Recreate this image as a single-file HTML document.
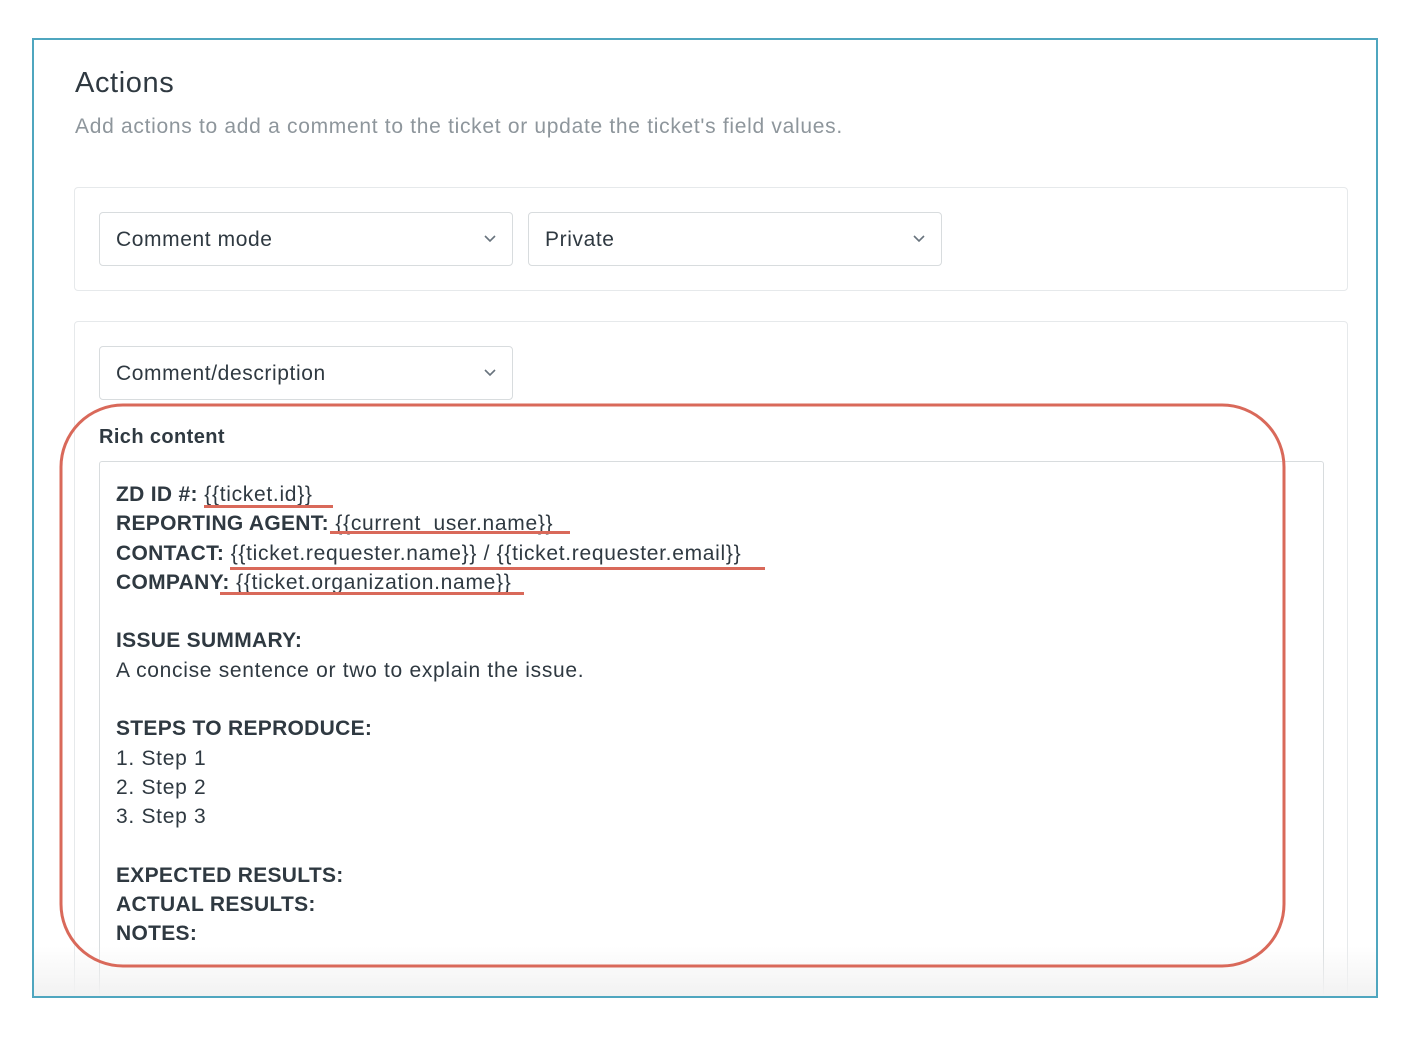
<!DOCTYPE html>
<html><head><meta charset="utf-8"><style>
*{margin:0;padding:0;box-sizing:border-box}
body{width:1412px;height:1064px;background:#fff;position:relative;overflow:hidden;font-family:"Liberation Sans",Arial,sans-serif;color:#2f3941}
.frame{position:absolute;left:32px;top:38px;width:1346px;height:960px;border:2px solid #4fa6bf;overflow:hidden;background:#fff}
.abs{position:absolute}
h1{position:absolute;left:41px;top:27px;font-size:29px;font-weight:normal;color:#2f3941;letter-spacing:0.6px}
.sub{position:absolute;left:41px;top:75px;font-size:21px;color:#8e969c;letter-spacing:0.7px}
.box{position:absolute;border:1px solid #e6e9eb;border-radius:4px;background:#fff}
.sel{position:absolute;height:54px;border:1px solid #d8dcde;border-radius:4px;font-size:21px;line-height:54px;padding-left:16px;background:#fff;letter-spacing:0.6px}
.sel svg{position:absolute;right:16px;top:22px}
.lab{position:absolute;left:65px;top:386px;font-size:20px;font-weight:bold;letter-spacing:0.4px}
.ed{position:absolute;left:65px;top:421px;width:1225px;height:600px;border:1px solid #d8dcde;border-radius:3px;padding:18px 16px;font-size:21px;line-height:29.3px;letter-spacing:0.7px}
b{font-weight:bold;letter-spacing:0.3px}
.ul{position:absolute;height:3px;background:#d9695a}
.fade{position:absolute;left:0;bottom:0;width:1346px;height:50px;background:linear-gradient(to bottom,rgba(245,245,245,0),#f2f2f2)}
</style></head><body>
<div class="frame">
<h1>Actions</h1>
<div class="sub">Add actions to add a comment to the ticket or update the ticket's field values.</div>
<div class="box" style="left:40px;top:147px;width:1274px;height:104px"></div>
<div class="sel" style="left:65px;top:172px;width:414px">Comment mode<svg width="12" height="8" viewBox="0 0 12 8"><path d="M1 1l5 5 5-5" fill="none" stroke="#68737d" stroke-width="1.6"/></svg></div>
<div class="sel" style="left:494px;top:172px;width:414px">Private<svg width="12" height="8" viewBox="0 0 12 8"><path d="M1 1l5 5 5-5" fill="none" stroke="#68737d" stroke-width="1.6"/></svg></div>
<div class="box" style="left:40px;top:281px;width:1274px;height:720px"></div>
<div class="sel" style="left:65px;top:306px;width:414px">Comment/description<svg width="12" height="8" viewBox="0 0 12 8"><path d="M1 1l5 5 5-5" fill="none" stroke="#68737d" stroke-width="1.6"/></svg></div>
<div class="lab">Rich content</div>
<div class="ed">
<b>ZD ID #:</b> {{ticket.id}}<br>
<b>REPORTING AGENT:</b> {{current_user.name}}<br>
<b>CONTACT:</b> {{ticket.requester.name}} / {{ticket.requester.email}}<br>
<b>COMPANY:</b> {{ticket.organization.name}}<br><br>
<b>ISSUE SUMMARY:</b><br>
A concise sentence or two to explain the issue.<br><br>
<b>STEPS TO REPRODUCE:</b><br>
1. Step 1<br>2. Step 2<br>3. Step 3<br><br>
<b>EXPECTED RESULTS:</b><br>
<b>ACTUAL RESULTS:</b><br>
<b>NOTES:</b>
</div>
<div class="fade"></div>
</div>
<svg class="abs" style="left:0;top:0" width="1412" height="1064">
<rect x="61" y="405" width="1223" height="561" rx="62" ry="62" fill="none" stroke="#d9695a" stroke-width="3"/>
</svg>
<div class="ul" style="left:204px;top:505px;width:129px"></div>
<div class="ul" style="left:330px;top:531px;width:240px"></div>
<div class="ul" style="left:230px;top:567px;width:535px"></div>
<div class="ul" style="left:220px;top:592px;width:304px"></div>
</body></html>
